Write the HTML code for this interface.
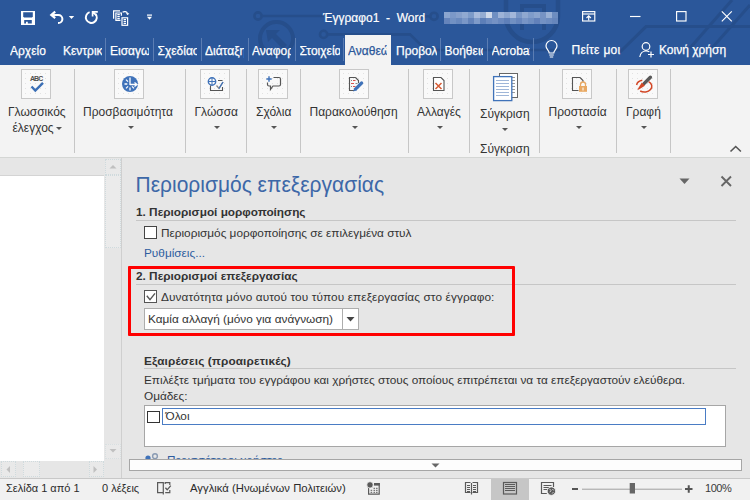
<!DOCTYPE html>
<html><head><meta charset="utf-8">
<style>
*{margin:0;padding:0;box-sizing:border-box}
html,body{width:750px;height:500px;overflow:hidden;background:#e6e6e6;font-family:"Liberation Sans",sans-serif;position:relative}
.a{position:absolute;white-space:nowrap}
svg.a{overflow:visible}
</style></head><body>
<div class="a" style="left:0px;top:0px;width:750px;height:65px;background:#2b579a"></div>
<svg class="a" style="left:0;top:0" width="750" height="65" viewBox="0 0 750 65">
<g stroke="#264e8b" stroke-width="2.6" fill="none">
<circle cx="258" cy="16" r="3.6"/>
<line x1="261.6" y1="16" x2="324" y2="16"/>
<circle cx="276.5" cy="38.5" r="16.5" stroke-width="4"/>
<circle cx="323.6" cy="34.4" r="3.6"/>
<path d="M327.2 34.4 H410 L426 50 H560"/>
<circle cx="434" cy="16.3" r="3.6"/>
<path d="M430.4 16.3 H405"/>
<path d="M506 0 V16 A26 26 0 0 0 558 16 V0" stroke-width="4.5"/><path d="M522 4 V30 M544 4 V30 M522 6 H544" stroke-width="4"/>
<path d="M750 26.6 H646 L620 52" stroke-width="3"/>
<path d="M732 0 L690 48" stroke-width="3"/>
<path d="M750 5 L712 48" stroke-width="3"/>
</g>
<g fill="#264e8b"><path d="M266 30 L280 30 L276 34 L287 45 L283 49 L272 38 L268 42 Z"/></g>
</svg>
<svg class="a" style="left:0;top:0" width="750" height="35" viewBox="0 0 750 35">
<rect x="21" y="11" width="14" height="14" fill="#fff"/>
<path d="M23.2 12.2 H32.8 V16.6 L32 17.4 H24 L23.2 16.6 Z" fill="#2b579a"/>
<path d="M24.2 20 H31.8 V23.6 H27.8 V21.8 H26 V23.6 H24.2 Z" fill="#2b579a"/>
<g fill="none" stroke="#fff">
<path d="M52 14.9 H58.3 A4.1 4.1 0 0 1 58.3 23.1 H58" stroke-width="2"/>
<path d="M55.2 11.6 L51.3 14.9 L55.2 18.2" stroke-width="2.2"/>
<path d="M89.6 12.2 A5.5 5.5 0 1 0 95.3 13.6" stroke-width="1.9"/>
<path d="M92.6 16.6 V11.8 H97.8 M92.8 12 L96.3 15.5" stroke-width="1.7"/>
</g>
<g fill="#fff">
<path d="M68.8 16 H74.2 L71.5 18.9 Z"/>
<rect x="147" y="14.5" width="5" height="1.2"/>
<path d="M147 16.8 H152 L149.5 19.8 Z"/>
</g>
<g fill="none" stroke="#fff" stroke-width="1.2">
<path d="M113.6 18.8 V10.8 H120"/>
<path d="M121.4 15.8 V13 H115.9 V20.4 H120.5"/>
<path d="M117.3 14.6 H119.8 M117.3 16.6 H119.8 M117.3 18.6 H119.8"/>
<rect x="122" y="17.8" width="5.6" height="7.5"/>
<path d="M123.6 19.6 H126 M123.6 21.5 H126 M123.6 23.4 H126"/>
<path d="M122.6 12.3 A3.2 3.2 0 0 1 127.6 13.6"/>
</g>
<path d="M125.8 13.2 H129.4 L127.6 15.2 Z" fill="#fff"/>
<g fill="none" stroke="#fff" stroke-width="1.15">
<rect x="582.6" y="11.6" width="12.2" height="9.4"/>
<line x1="582.6" y1="14" x2="594.8" y2="14"/>
<path d="M588.7 20.5 V16 M586.5 18 L588.7 15.8 L590.9 18"/>
<line x1="630" y1="16.5" x2="640.5" y2="16.5"/>
<rect x="676.6" y="11.6" width="9.4" height="9.4"/>
<path d="M721.8 11.3 L731.8 21.3 M731.8 11.3 L721.8 21.3"/>
</g>
</svg>
<div class="a" style="left:444px;top:12px;width:6px;height:6px;background:#8aa5cf"></div>
<div class="a" style="left:444px;top:18px;width:6px;height:6px;background:#6584bb"></div>
<div class="a" style="left:450px;top:12px;width:6px;height:6px;background:#7b98c8"></div>
<div class="a" style="left:450px;top:18px;width:6px;height:6px;background:#7291c3"></div>
<div class="a" style="left:456px;top:12px;width:6px;height:6px;background:#859fcb"></div>
<div class="a" style="left:456px;top:18px;width:6px;height:6px;background:#6989be"></div>
<div class="a" style="left:462px;top:12px;width:6px;height:6px;background:#90a9d1"></div>
<div class="a" style="left:462px;top:18px;width:6px;height:6px;background:#7a97c7"></div>
<div class="a" style="left:468px;top:12px;width:6px;height:6px;background:#7d9bc9"></div>
<div class="a" style="left:468px;top:18px;width:6px;height:6px;background:#6383ba"></div>
<div class="a" style="left:474px;top:12px;width:6px;height:6px;background:#a8bbdc"></div>
<div class="a" style="left:474px;top:18px;width:6px;height:6px;background:#7f9bc9"></div>
<div class="a" style="left:480px;top:12px;width:6px;height:6px;background:#94acd2"></div>
<div class="a" style="left:480px;top:18px;width:6px;height:6px;background:#5d7fb8"></div>
<div class="a" style="left:486px;top:12px;width:6px;height:6px;background:#cfd9ea"></div>
<div class="a" style="left:486px;top:18px;width:6px;height:6px;background:#6c8bc0"></div>
<div class="a" style="left:492px;top:12px;width:6px;height:6px;background:#6f8fc2"></div>
<div class="a" style="left:492px;top:18px;width:6px;height:6px;background:#7592c4"></div>
<div class="a" style="left:498px;top:12px;width:6px;height:6px;background:#9db3d7"></div>
<div class="a" style="left:498px;top:18px;width:6px;height:6px;background:#6a89bf"></div>
<div class="a" style="left:504px;top:12px;width:6px;height:6px;background:#8ca6cf"></div>
<div class="a" style="left:504px;top:18px;width:6px;height:6px;background:#5f80b9"></div>
<div class="a" style="left:510px;top:12px;width:6px;height:6px;background:#a3b7da"></div>
<div class="a" style="left:510px;top:18px;width:6px;height:6px;background:#7190c2"></div>
<div class="a" style="left:516px;top:12px;width:6px;height:6px;background:#7896c6"></div>
<div class="a" style="left:516px;top:18px;width:6px;height:6px;background:#6786bd"></div>
<div class="a" style="left:522px;top:12px;width:6px;height:6px;background:#8fa8d0"></div>
<div class="a" style="left:522px;top:18px;width:6px;height:6px;background:#7895c6"></div>
<div class="a" style="left:528px;top:12px;width:6px;height:6px;background:#7f9cca"></div>
<div class="a" style="left:528px;top:18px;width:6px;height:6px;background:#6f8ec1"></div>
<div class="a" style="left:534px;top:12px;width:6px;height:6px;background:#8aa4ce"></div>
<div class="a" style="left:534px;top:18px;width:6px;height:6px;background:#6281ba"></div>
<div class="a" style="left:540px;top:12px;width:6px;height:6px;background:#7693c4"></div>
<div class="a" style="left:540px;top:18px;width:6px;height:6px;background:#7391c3"></div>
<div class="a" style="left:546px;top:12px;width:6px;height:6px;background:#99b0d5"></div>
<div class="a" style="left:546px;top:18px;width:6px;height:6px;background:#6d8cc0"></div>
<div class="a" style="left:552px;top:12px;width:6px;height:6px;background:#6d8dc0"></div>
<div class="a" style="left:552px;top:18px;width:6px;height:6px;background:#6686bc"></div>
<div class="a " style="left:323px;top:11.64px;font-size:12px;line-height:1;color:#fff;-webkit-text-stroke:0.2px #fff">Έγγραφο1 &nbsp;- &nbsp;Word</div>
<div class="a" style="left:10px;top:43.84px;width:50px;overflow:hidden;font-size:12px;line-height:1.25;color:#fff;-webkit-text-stroke:0.25px #fff">Αρχείο</div>
<div class="a" style="left:63px;top:43.84px;width:39px;overflow:hidden;font-size:12px;line-height:1.25;color:#fff;-webkit-text-stroke:0.25px #fff">Κεντρική</div>
<div class="a" style="left:110px;top:43.84px;width:39px;overflow:hidden;font-size:12px;line-height:1.25;color:#fff;-webkit-text-stroke:0.25px #fff">Εισαγωγή</div>
<div class="a" style="left:157.5px;top:43.84px;width:39.0px;overflow:hidden;font-size:12px;line-height:1.25;color:#fff;-webkit-text-stroke:0.25px #fff">Σχεδίαση</div>
<div class="a" style="left:205px;top:43.84px;width:38.5px;overflow:hidden;font-size:12px;line-height:1.25;color:#fff;-webkit-text-stroke:0.25px #fff">Διάταξη</div>
<div class="a" style="left:252px;top:43.84px;width:39px;overflow:hidden;font-size:12px;line-height:1.25;color:#fff;-webkit-text-stroke:0.25px #fff">Αναφορές</div>
<div class="a" style="left:299.5px;top:43.84px;width:40.0px;overflow:hidden;font-size:12px;line-height:1.25;color:#fff;-webkit-text-stroke:0.25px #fff">Στοιχεία</div>
<div class="a" style="left:396px;top:43.84px;width:40.5px;overflow:hidden;font-size:12px;line-height:1.25;color:#fff;-webkit-text-stroke:0.25px #fff">Προβολή</div>
<div class="a" style="left:444.5px;top:43.84px;width:38.0px;overflow:hidden;font-size:12px;line-height:1.25;color:#fff;-webkit-text-stroke:0.25px #fff">Βοήθεια</div>
<div class="a" style="left:491.5px;top:43.84px;width:38.0px;overflow:hidden;font-size:12px;line-height:1.25;color:#fff;-webkit-text-stroke:0.25px #fff">Acrobat</div>
<div class="a" style="left:105px;top:38px;width:1px;height:23px;background:#5b7db3"></div>
<div class="a" style="left:153px;top:38px;width:1px;height:23px;background:#5b7db3"></div>
<div class="a" style="left:201px;top:38px;width:1px;height:23px;background:#5b7db3"></div>
<div class="a" style="left:248px;top:38px;width:1px;height:23px;background:#5b7db3"></div>
<div class="a" style="left:295px;top:38px;width:1px;height:23px;background:#5b7db3"></div>
<div class="a" style="left:343px;top:38px;width:1px;height:23px;background:#5b7db3"></div>
<div class="a" style="left:440px;top:38px;width:1px;height:23px;background:#5b7db3"></div>
<div class="a" style="left:487px;top:38px;width:1px;height:23px;background:#5b7db3"></div>
<div class="a" style="left:533px;top:38px;width:1px;height:23px;background:#5b7db3"></div>
<div class="a" style="left:345px;top:35px;width:46px;height:30px;background:#f3f3f3"></div>
<div class="a" style="left:348px;top:43.84px;width:39px;overflow:hidden;font-size:12px;line-height:1.25;color:#2b579a;-webkit-text-stroke:0.25px #2b579a">Αναθεώρηση</div>
<div class="a " style="left:571.5px;top:43.84px;font-size:12px;line-height:1;color:#fff;-webkit-text-stroke:0.25px #fff;letter-spacing:0.3px">Πείτε μοι</div>
<div class="a " style="left:659px;top:43.84px;font-size:12px;line-height:1;color:#fff;-webkit-text-stroke:0.25px #fff">Κοινή χρήση</div>
<svg class="a" style="left:0;top:35" width="750" height="30" viewBox="0 35 750 30">
<g fill="none" stroke="#fff" stroke-width="1.2">
<path d="M549.2 53 C549.2 50.5 546 49 546 46 A5.5 5.5 0 0 1 557 46 C557 49 553.8 50.5 553.8 53 Z"/>
<path d="M549.2 55 H553.8 M549.8 57 H553.2"/>
<circle cx="646" cy="46.5" r="3.8"/>
<path d="M639.8 57 C640.5 52.5 642.5 51 646 51 C647.5 51 648.5 51.3 649.3 51.8"/>
<path d="M651 51.5 V57.5 M648 54.5 H654"/>
</g></svg>
<div class="a" style="left:0px;top:65px;width:750px;height:93px;background:#f3f3f3"></div>
<div class="a" style="left:0px;top:157px;width:750px;height:1px;background:#d4d6d4"></div>
<div class="a" style="left:74px;top:69px;width:1px;height:84px;background:#c6c6c6"></div>
<div class="a" style="left:185px;top:69px;width:1px;height:84px;background:#c6c6c6"></div>
<div class="a" style="left:246px;top:69px;width:1px;height:84px;background:#c6c6c6"></div>
<div class="a" style="left:300px;top:69px;width:1px;height:84px;background:#c6c6c6"></div>
<div class="a" style="left:408px;top:69px;width:1px;height:84px;background:#c6c6c6"></div>
<div class="a" style="left:469px;top:69px;width:1px;height:84px;background:#c6c6c6"></div>
<div class="a" style="left:539px;top:69px;width:1px;height:84px;background:#c6c6c6"></div>
<div class="a" style="left:616px;top:69px;width:1px;height:84px;background:#c6c6c6"></div>
<div class="a" style="left:670px;top:69px;width:1px;height:84px;background:#c6c6c6"></div>
<div class="a" style="left:21px;top:69px;width:30px;height:30px;background:#f9f9f9 radial-gradient(circle,#e2e2e2 0.7px,transparent 0.9px) 1px 1px/5px 5px;border:1px solid #c8c8c8"></div>
<div class="a" style="left:114px;top:69px;width:30px;height:30px;background:#f9f9f9 radial-gradient(circle,#e2e2e2 0.7px,transparent 0.9px) 1px 1px/5px 5px;border:1px solid #c8c8c8"></div>
<div class="a" style="left:200px;top:69px;width:30px;height:30px;background:#f9f9f9 radial-gradient(circle,#e2e2e2 0.7px,transparent 0.9px) 1px 1px/5px 5px;border:1px solid #c8c8c8"></div>
<div class="a" style="left:258px;top:69px;width:30px;height:30px;background:#f9f9f9 radial-gradient(circle,#e2e2e2 0.7px,transparent 0.9px) 1px 1px/5px 5px;border:1px solid #c8c8c8"></div>
<div class="a" style="left:339px;top:69px;width:30px;height:30px;background:#f9f9f9 radial-gradient(circle,#e2e2e2 0.7px,transparent 0.9px) 1px 1px/5px 5px;border:1px solid #c8c8c8"></div>
<div class="a" style="left:423px;top:69px;width:30px;height:30px;background:#f9f9f9 radial-gradient(circle,#e2e2e2 0.7px,transparent 0.9px) 1px 1px/5px 5px;border:1px solid #c8c8c8"></div>
<div class="a" style="left:562px;top:69px;width:30px;height:30px;background:#f9f9f9 radial-gradient(circle,#e2e2e2 0.7px,transparent 0.9px) 1px 1px/5px 5px;border:1px solid #c8c8c8"></div>
<div class="a" style="left:628px;top:69px;width:30px;height:30px;background:#f9f9f9 radial-gradient(circle,#e2e2e2 0.7px,transparent 0.9px) 1px 1px/5px 5px;border:1px solid #c8c8c8"></div>
<div class="a " style="left:8px;top:106.34px;font-size:12px;line-height:1;color:#333;">Γλωσσικός</div>
<div class="a " style="left:12.5px;top:122.34px;font-size:12px;line-height:1;color:#333;">έλεγχος</div>
<div class="a" style="left:56.2px;top:126.5px;width:0;height:0;border-left:3px solid transparent;border-right:3px solid transparent;border-top:3px solid #555"></div>
<div class="a " style="left:83px;top:106.34px;font-size:12px;line-height:1;color:#333;">Προσβασιμότητα</div>
<div class="a" style="left:127.5px;top:126px;width:0;height:0;border-left:3px solid transparent;border-right:3px solid transparent;border-top:3px solid #555"></div>
<div class="a " style="left:194.5px;top:106.34px;font-size:12px;line-height:1;color:#333;">Γλώσσα</div>
<div class="a" style="left:213.5px;top:126px;width:0;height:0;border-left:3px solid transparent;border-right:3px solid transparent;border-top:3px solid #555"></div>
<div class="a " style="left:256px;top:106.34px;font-size:12px;line-height:1;color:#333;">Σχόλια</div>
<div class="a" style="left:270.5px;top:126px;width:0;height:0;border-left:3px solid transparent;border-right:3px solid transparent;border-top:3px solid #555"></div>
<div class="a " style="left:309.5px;top:106.34px;font-size:12px;line-height:1;color:#333;">Παρακολούθηση</div>
<div class="a" style="left:351.5px;top:126px;width:0;height:0;border-left:3px solid transparent;border-right:3px solid transparent;border-top:3px solid #555"></div>
<div class="a " style="left:417px;top:106.34px;font-size:12px;line-height:1;color:#333;">Αλλαγές</div>
<div class="a" style="left:437.0px;top:126px;width:0;height:0;border-left:3px solid transparent;border-right:3px solid transparent;border-top:3px solid #555"></div>
<div class="a " style="left:480px;top:108.24px;font-size:12px;line-height:1;color:#333;">Σύγκριση</div>
<div class="a" style="left:501.5px;top:128px;width:0;height:0;border-left:3px solid transparent;border-right:3px solid transparent;border-top:3px solid #555"></div>
<div class="a " style="left:480px;top:143.24px;font-size:12px;line-height:1;color:#333;">Σύγκριση</div>
<div class="a " style="left:548.5px;top:106.34px;font-size:12px;line-height:1;color:#333;">Προστασία</div>
<div class="a" style="left:575.5px;top:126px;width:0;height:0;border-left:3px solid transparent;border-right:3px solid transparent;border-top:3px solid #555"></div>
<div class="a " style="left:626px;top:106.34px;font-size:12px;line-height:1;color:#333;">Γραφή</div>
<div class="a" style="left:640.5px;top:126px;width:0;height:0;border-left:3px solid transparent;border-right:3px solid transparent;border-top:3px solid #555"></div>
<svg class="a" style="left:728px;top:144px" width="16" height="10"><path d="M2.5 7.5 L7.7 2.5 L12.9 7.5" stroke="#555" stroke-width="1.6" fill="none"/></svg>
<svg class="a" style="left:0;top:65px" width="750" height="40" viewBox="0 65 750 40">
<text x="30" y="80.8" font-family="Liberation Sans" font-weight="bold" font-size="7" fill="#505050" textLength="13.2">ABC</text>
<path d="M31.5 86.5 L35.3 90.5 L43 82.8" stroke="#3b6fb6" stroke-width="2.4" fill="none"/>
<circle cx="130" cy="84" r="8" fill="#3f72b9"/>
<g stroke="#fff" stroke-width="1.3" fill="none">
<path d="M130 77.5 V85 M130 84.5 H136"/><path d="M134.5 82.5 L137 84.5 L134.5 86.5"/>
<path d="M124.5 84 H127.3 M126 79.6 L128 81.6 M126 88.4 L128 86.4 M130 90.5 V87.5 M134 88.4 L132 86.4"/>
</g>
<circle cx="212" cy="81.5" r="3.7" stroke="#3f72b9" stroke-width="1.4" fill="none"/>
<path d="M208.5 81.5 H215.5 M212 77.8 V85.2" stroke="#3f72b9" stroke-width="1"/>
<path d="M210.5 85.5 V90.5 H222.5 V87 M218 80.5 H222.5" stroke="#555" stroke-width="1.1" fill="none"/>
<path d="M216.5 85.5 L219 88.5 L223 82" stroke="#888" stroke-width="1.3" fill="none"/>
<path d="M219 88.5 L223 82" stroke="#3f72b9" stroke-width="1.3" fill="none"/>
<path d="M266.3 79 H271.7 M269 76.3 V81.7" stroke="#3f72b9" stroke-width="1.4"/>
<path d="M273.5 77.5 H279 Q280.5 77.5 280.5 79 V84.5 Q280.5 86 279 86 H273 L270.5 89.5 V86 H269 Q267.5 86 267.5 84.5 V82.5" stroke="#555" stroke-width="1.2" fill="none"/>
<path d="M355.5 77.5 H349.5 V90.5 H354 M355.5 77.5 L358.5 80.5 V83" stroke="#555" stroke-width="1.1" fill="none"/>
<path d="M353 80.5 H355.5 M351 83.5 H354 M353 86.5 H355.5" stroke="#d9534f" stroke-width="1.1"/>
<path d="M351 80.5 H352 M355.5 83.5 H357.5 M351 86.5 H352" stroke="#888" stroke-width="1.1"/>
<path d="M355.8 88.8 L361.6 83" stroke="#3f72b9" stroke-width="3.2" stroke-linecap="round"/>
<path d="M353.2 91.4 L354.3 87.7 L357 90.3 Z" fill="#3f72b9"/>
<path d="M438.5 77.5 H433.5 V90.5 H444 V80.5 L441 77.5 Z" stroke="#555" stroke-width="1.1" fill="#fff"/>
<path d="M435.5 83 L441.5 89 M441.5 83 L435.5 89" stroke="#d65b34" stroke-width="1.5"/>
<rect x="499.5" y="73.5" width="18" height="24" fill="#fff" stroke="#666" stroke-width="1"/>
<g stroke="#999" stroke-width="1"><path d="M512 77.5 H515 M512 80.5 H515 M512 83.5 H515 M512 86.5 H515 M512 89.5 H515 M512 92.5 H515"/></g>
<rect x="493.6" y="76.6" width="18.2" height="24" fill="#fff" stroke="#3f72b9" stroke-width="1.3"/>
<g stroke="#9fb6d8" stroke-width="1"><path d="M496 80.5 H509 M496 83.5 H509 M496 86.5 H509 M496 89.5 H509 M496 92.5 H509 M496 95.5 H509"/></g>
<path d="M580 77.5 H572.5 V90.5 H578.5 M580 77.5 L583 80.5 V82" stroke="#555" stroke-width="1.1" fill="none"/>
<path d="M580.5 86 V84.5 A2.5 2.5 0 0 1 585.5 84.5 V86" stroke="#e8a862" stroke-width="1.3" fill="none"/>
<rect x="579" y="86" width="8" height="5.8" fill="#e8a862"/>
<path d="M583 87.5 V90.5" stroke="#fff" stroke-width="1"/>
<path d="M636.6 85 A7.3 5.6 0 0 1 642.3 80.3 M648.6 81.6 A7.3 5.6 0 0 1 640.2 91" stroke="#d24726" stroke-width="1.5" fill="none"/>
<path d="M644 83.6 L650.4 77.2" stroke="#595959" stroke-width="3.4" stroke-linecap="round"/>
<path d="M637.3 90.3 L638.5 87.8 L641.8 82.6 L644.9 85.7 L639.7 89.1 Z" fill="#d24726"/>
</svg>
<div class="a" style="left:0px;top:158px;width:121px;height:320px;background:#e6e6e6"></div>
<div class="a" style="left:0px;top:175px;width:104px;height:286px;background:#fff"></div>
<div class="a" style="left:0px;top:175px;width:104px;height:1px;background:#d4d4d4"></div>
<div class="a" style="left:105px;top:158px;width:16px;height:302px;background:#e6e6e6"></div>
<div class="a" style="left:105px;top:159px;width:16px;height:16px;background:#e9e9e9;border:1px dotted #cfdadd"></div>
<div class="a" style="left:105px;top:175px;width:16px;height:73px;background:#ebebeb;border:1px dotted #cfdadd"></div>
<div class="a" style="left:105px;top:444px;width:16px;height:15px;background:#e9e9e9;border:1px dotted #d8dfe1"></div>
<svg class="a" style="left:105px;top:158px" width="16" height="302"><path d="M4.5 10.5 L8 7 L11.5 10.5 Z" fill="#c0c0c0"/><path d="M4.5 291 L8 294.5 L11.5 291 Z" fill="#c0c0c0"/></svg>
<div class="a" style="left:0px;top:461px;width:104px;height:17px;background:#e6e6e6"></div>
<div class="a" style="left:1px;top:461px;width:15px;height:16px;background:#e9e9e9;border:1px dotted #cfdadd"></div>
<div class="a" style="left:23px;top:461px;width:17px;height:16px;background:#ebebeb;border:1px dotted #cfdadd"></div>
<div class="a" style="left:89px;top:461px;width:15px;height:16px;background:#e9e9e9;border:1px dotted #cfdadd"></div>
<svg class="a" style="left:0;top:461px" width="104" height="17"><path d="M10 5 L6.5 8.5 L10 12 Z" fill="#c0c0c0"/><path d="M93.5 5 L97 8.5 L93.5 12 Z" fill="#c0c0c0"/></svg>
<div class="a" style="left:121px;top:158px;width:1px;height:320px;background:#cfcfcf"></div>
<div class="a " style="left:135.5px;top:174.22px;font-size:21px;line-height:1;color:#3d68a8;transform:scaleY(1.07);transform-origin:0 80%;">Περιορισμός επεξεργασίας</div>
<svg class="a" style="left:676px;top:172px" width="60" height="20"><path d="M3.5 6.5 H13.5 L8.5 12 Z" fill="#666"/><path d="M45.5 4.5 L55 14 M55 4.5 L45.5 14" stroke="#666" stroke-width="1.9"/></svg>
<div class="a " style="left:136px;top:207.31px;font-size:11.8px;line-height:1;color:#333;font-weight:bold;">1. Περιορισμοί μορφοποίησης</div>
<div class="a" style="left:136px;top:220px;width:600px;height:1px;background:#c6c6c6"></div>
<div class="a" style="left:144px;top:226px;width:13px;height:13px;background:#fff;border:1px solid #444"></div>
<div class="a " style="left:161px;top:228.01px;font-size:11.8px;line-height:1;color:#333;">Περιορισμός μορφοποίησης σε επιλεγμένα στυλ</div>
<div class="a " style="left:144px;top:247.81px;font-size:11.8px;line-height:1;color:#2e5d9f;">Ρυθμίσεις...</div>
<div class="a " style="left:136px;top:271.21px;font-size:11.8px;line-height:1;color:#333;font-weight:bold;">2. Περιορισμοί επεξεργασίας</div>
<div class="a" style="left:136px;top:284px;width:600px;height:1px;background:#c6c6c6"></div>
<div class="a" style="left:144px;top:290px;width:13px;height:13px;background:#fff;border:1px solid #555"></div>
<svg class="a" style="left:144px;top:290px" width="13" height="13"><path d="M2.8 5.8 L6 9.6 L11 3.4" stroke="#555" stroke-width="1.4" fill="none"/></svg>
<div class="a " style="left:161px;top:291.51px;font-size:11.8px;line-height:1;color:#333;letter-spacing:0.11px;">Δυνατότητα μόνο αυτού του τύπου επεξεργασίας στο έγγραφο:</div>
<div class="a" style="left:144px;top:308px;width:215px;height:22px;background:#fff;border:1px solid #adadad"></div>
<div class="a" style="left:342px;top:308px;width:1px;height:22px;background:#adadad"></div>
<svg class="a" style="left:343px;top:308px" width="16" height="22"><path d="M3.5 9 H11.5 L7.5 13.5 Z" fill="#444"/></svg>
<div class="a " style="left:148px;top:313.51px;font-size:11.8px;line-height:1;color:#333;">Καμία αλλαγή (μόνο για ανάγνωση)</div>
<div class="a" style="left:128px;top:266px;width:387px;height:70px;border:3px solid #ff0000;border-radius:1px"></div>
<div class="a " style="left:144px;top:355.61px;font-size:11.8px;line-height:1;color:#333;font-weight:bold;letter-spacing:0.12px;">Εξαιρέσεις (προαιρετικές)</div>
<div class="a" style="left:144px;top:368px;width:592px;height:1px;background:#c6c6c6"></div>
<div class="a " style="left:144px;top:375.31px;font-size:11.8px;line-height:1;color:#333;">Επιλέξτε τμήματα του εγγράφου και χρήστες στους οποίους επιτρέπεται να τα επεξεργαστούν ελεύθερα.</div>
<div class="a " style="left:144px;top:391.21px;font-size:11.8px;line-height:1;color:#333;">Ομάδες:</div>
<div class="a" style="left:144px;top:405px;width:582px;height:41.5px;background:#fff;border:1px solid #a6a6a6"></div>
<div class="a" style="left:147px;top:410.5px;width:13px;height:12.5px;background:#fff;border:1.3px solid #333"></div>
<div class="a" style="left:162px;top:408px;width:544px;height:17px;background:#fff;border:1px solid #4a7cc4"></div>
<div class="a " style="left:165.5px;top:411.01px;font-size:11.8px;line-height:1;color:#333;">Όλοι</div>
<div class="a" style="left:144px;top:452px;width:300px;height:7px;overflow:hidden"><div class="a" style="left:0;top:0"><svg width="16" height="10" style="display:block"><circle cx="4" cy="6" r="2.6" fill="#3f72b9"/><circle cx="11" cy="4.2" r="2.4" fill="none" stroke="#8a9bb3" stroke-width="1.4"/></svg></div><div class="a" style="left:23px;top:3px;font-size:11.8px;line-height:1;color:#2e5d9f">Περισσότεροι χρήστες...</div></div>
<div class="a" style="left:129px;top:459px;width:613px;height:12px;background:#fdfdfd;border:1px solid #a6a6a6"></div>
<svg class="a" style="left:430px;top:461.5px" width="12" height="8"><path d="M1.5 1.5 H9.5 L5.5 5.5 Z" fill="#666"/></svg>
<div class="a" style="left:0px;top:478px;width:750px;height:22px;background:#f1f1f1"></div>
<div class="a" style="left:0px;top:478px;width:750px;height:1px;background:#c8c8c8"></div>
<div class="a " style="left:6px;top:483.49px;font-size:11px;line-height:1;color:#2b2b2b;">Σελίδα 1 από 1</div>
<div class="a " style="left:102px;top:483.49px;font-size:11px;line-height:1;color:#2b2b2b;">0 λέξεις</div>
<div class="a " style="left:190px;top:483.23px;font-size:11.3px;line-height:1;color:#2b2b2b;">Αγγλικά (Ηνωμένων Πολιτειών)</div>
<div class="a" style="left:491px;top:479px;width:38px;height:21px;background:#c6c6c6"></div>
<div class="a " style="left:705px;top:483.19px;font-size:11px;line-height:1;color:#3a3a3a;letter-spacing:-0.45px;">100%</div>
<svg class="a" style="left:0;top:478px" width="750" height="22" viewBox="0 478 750 22">
<g fill="none" stroke="#5a5a5a" stroke-width="1.2">
<path d="M163.3 492.6 H157.6 V482.6 H163.3 V494.5"/>
<path d="M165.2 492.6 H169.8 V490 M169.8 485 V482.6 H165.2 V484"/>
<path d="M165.4 487.8 L167.2 489.8 L170.8 485.6" stroke-width="1.3"/>
<path d="M471.5 483 V494.5"/>
<path d="M470.5 482.5 H465.5 V492.5 H470.5 M472.5 482.5 H477.5 V492.5 H472.5"/>
<path d="M467 485.5 H470 M467 487.5 H470 M467 489.5 H470 M467 491.5 H470 M473 485.5 H476 M473 487.5 H476 M473 489.5 H476 M473 491.5 H476" stroke-width="1"/>
<rect x="503.5" y="482.5" width="13" height="11.5"/>
<path d="M505 484.5 H515 M505 486.5 H515 M505 488.5 H515 M505 490.5 H515" stroke-width="1"/>
<path d="M553.5 487 V482.5 H541.5 V493.5 H546.8"/>
<path d="M543.5 485.5 H551.5 M543.5 487.5 H549 M543.5 489.5 H547.5" stroke-width="1"/>
</g>
<circle cx="551.4" cy="491.1" r="4.2" fill="#5a5a5a" stroke="#f1f1f1" stroke-width="0.8"/>
<path d="M549.5 488.8 L551 490.6 L549.8 492.2 M552.4 489 L553.6 490.4 M552.2 493.5 L553.4 492.1" stroke="#f1f1f1" stroke-width="0.8" fill="none"/>
<path d="M368.6 487.5 V494.2 H379.2 V483.6 H374" stroke="#5a5a5a" stroke-width="1.2" fill="none"/>
<rect x="374" y="483" width="5.8" height="2.6" fill="#5a5a5a"/>
<g fill="#5a5a5a"><rect x="373.5" y="487.8" width="1.6" height="1"/><rect x="376" y="487.8" width="1.6" height="1"/><rect x="370.6" y="489.8" width="1.6" height="1"/><rect x="373.5" y="489.8" width="1.6" height="1"/><rect x="376" y="489.8" width="1.6" height="1"/><rect x="370.6" y="491.8" width="1.6" height="1"/><rect x="373.5" y="491.8" width="1.6" height="1"/><rect x="376" y="491.8" width="1.6" height="1"/></g>
<circle cx="370" cy="484.9" r="3.2" fill="#5a5a5a" stroke="#f1f1f1" stroke-width="0.8"/>
<rect x="572" y="488" width="6" height="2" fill="#555"/>
<rect x="582" y="488.7" width="100" height="1" fill="#a0a0a0"/>
<rect x="629.7" y="483" width="5.3" height="10.5" fill="#666"/>
<path d="M685 489 H692.5 M688.75 485.3 V492.7" stroke="#555" stroke-width="2"/>
</svg>
</body></html>
